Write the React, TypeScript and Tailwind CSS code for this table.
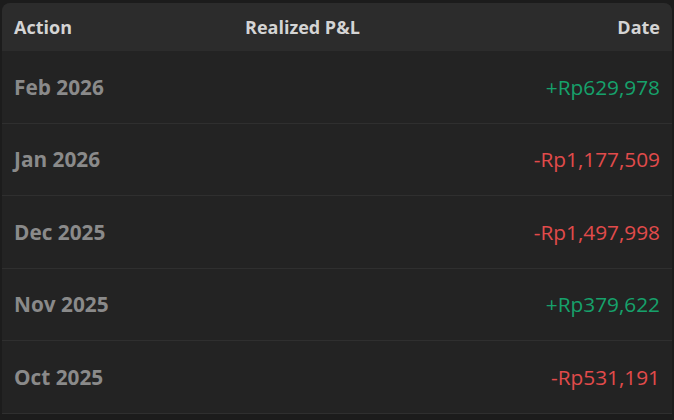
const rows = [
  { month: "Feb 2026", pnl: "+Rp629,978", up: true },
  { month: "Jan 2026", pnl: "-Rp1,177,509", up: false },
  { month: "Dec 2025", pnl: "-Rp1,497,998", up: false },
  { month: "Nov 2025", pnl: "+Rp379,622", up: true },
  { month: "Oct 2025", pnl: "-Rp531,191", up: false },
];

const App = () => {
  return (
    <main className="h-[420px] overflow-hidden bg-[#1c1c1c] pt-[3px] px-[2px] font-['Open_Sans',sans-serif]">
      <div className="rounded-t-lg bg-[#232323] overflow-hidden">
        <div className="grid grid-cols-[231px_1fr_auto] items-center h-[48px] pt-[1px] px-3 bg-[#2c2c2c] text-[18px] font-bold text-[#d4d4d4]">
          <span>Action</span>
          <span>Realized P&amp;L</span>
          <span className="text-right">Date</span>
        </div>
        {rows.map((r) => (
          <div
            key={r.month}
            className="flex items-center justify-between h-[72.5px] pt-[1px] px-3 border-b border-[#2f2f2f]"
          >
            <span className="text-[20.8px] font-bold text-[#8a8a8a]">{r.month}</span>
            <span className={"text-[20.8px] " + (r.up ? "text-[#16a16b]" : "text-[#e14b4b]")}>
              {r.pnl}
            </span>
          </div>
        ))}
      </div>
    </main>
  );
};

export default App;
